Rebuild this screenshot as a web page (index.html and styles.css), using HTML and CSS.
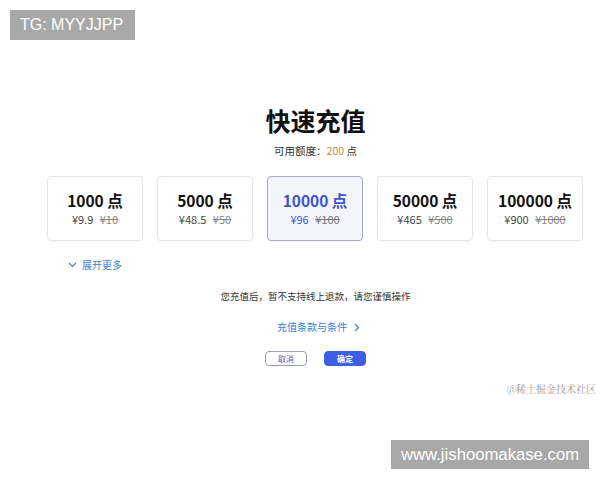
FILE: index.html
```html
<!DOCTYPE html>
<html lang="zh-CN">
<head>
    <meta charset="UTF-8">
    <meta name="viewport" content="width=device-width, initial-scale=1.0">
    <title>快速充值</title>
    <link rel="stylesheet" href="styles.css">
</head>
<body>
    <div class="tag tag-top">TG: MYYJJPP</div>

    <div class="recharge">
        <div class="title">快速充值</div>
        <div class="balance">可用额度：<span class="amount">200</span> 点</div>

        <div class="cards">
            <div class="card">
                <div class="points">1000 点</div>
                <div class="price">¥9.9 <s>¥10</s></div>
            </div>
            <div class="card">
                <div class="points">5000 点</div>
                <div class="price">¥48.5 <s>¥50</s></div>
            </div>
            <div class="card active">
                <div class="points">10000 点</div>
                <div class="price">¥96 <s>¥100</s></div>
            </div>
            <div class="card">
                <div class="points">50000 点</div>
                <div class="price">¥465 <s>¥500</s></div>
            </div>
            <div class="card">
                <div class="points">100000 点</div>
                <div class="price">¥900 <s>¥1000</s></div>
            </div>
        </div>

        <div class="more">
            <svg width="9" height="6" viewBox="0 0 9 6"><path d="M1 1l3.5 3.5L8 1" fill="none" stroke="#3b7fd0" stroke-width="1.1"/></svg>
            展开更多
        </div>

        <div class="notice">您充值后，暂不支持线上退款，请您谨慎操作</div>

        <div class="terms">充值条款与条件
            <svg width="6" height="9" viewBox="0 0 6 9"><path d="M1 1l3.5 3.5L1 8" fill="none" stroke="#3b7fd0" stroke-width="1.1"/></svg>
        </div>

        <div class="actions">
            <button class="btn btn-cancel">取消</button>
            <button class="btn btn-ok">确定</button>
        </div>
    </div>

    <div class="credit">@稀土掘金技术社区</div>
    <div class="tag tag-bottom">www.jishoomakase.com</div>
</body>
</html>
```

FILE: styles.css
```css
body {
    margin: 0;
    width: 600px;
    height: 480px;
    background: #ffffff;
    font-family: "Noto Sans CJK SC", "Noto Sans", sans-serif;
    color: #222;
    position: relative;
    overflow: hidden;
}
.tag {
    position: absolute;
    background: #a8a8a8;
    color: #ffffff;
    font-family: "Liberation Sans", Arial, sans-serif;
    font-size: 16px;
    line-height: 30px;
    padding: 0 10px;
}
.tag-top {
    top: 10px;
    left: 10px;
    width: 105px;
}
.tag-bottom {
    top: 440px;
    left: 391px;
    width: 178px;
    height: 29px;
    line-height: 29px;
    font-size: 16.7px;
}
.recharge {
    width: 537px;
    margin-left: 47px;
    padding-top: 102px;
    display: flex;
    flex-direction: column;
    align-items: center;
}
.title {
    font-size: 25px;
    font-weight: bold;
    color: #111;
    line-height: 36px;
}
.balance {
    font-size: 10.5px;
    color: #333;
    margin-top: 5px;
    line-height: 16px;
}
.amount {
    color: #c08a3e;
}
.cards {
    display: flex;
    gap: 14px;
    margin-top: 17px;
    align-self: stretch;
}
.card {
    width: 96px;
    height: 65px;
    box-sizing: border-box;
    border: 1px solid #e6e6e6;
    border-radius: 4px;
    background: #ffffff;
    box-shadow: 0 1px 2px rgba(0, 0, 0, 0.04);
    display: flex;
    flex-direction: column;
    align-items: center;
    justify-content: center;
}
.card.active {
    background: #f3f5fd;
    border-color: #a8abbf;
}
.points {
    font-size: 15.5px;
    font-weight: bold;
    color: #111;
    line-height: 22px;
    margin-top: -1px;
}
.price {
    font-size: 11px;
    color: #444;
    line-height: 16px;
}
.price s {
    color: #888;
    margin-left: 4px;
}
.active .points,
.active .price {
    color: #3d55c8;
}
.active .price s {
    color: #777;
}
.more {
    align-self: flex-start;
    margin-left: 21px;
    margin-top: 16px;
    font-size: 10px;
    color: #3b7fd0;
    line-height: 16px;
    display: flex;
    align-items: center;
    gap: 5px;
}
.notice {
    font-size: 9.5px;
    color: #333;
    margin-top: 15px;
    line-height: 16px;
}
.terms {
    font-size: 10px;
    color: #3b7fd0;
    margin-top: 15px;
    line-height: 16px;
    display: flex;
    align-items: center;
    gap: 7px;
    margin-left: 6px;
}
.actions {
    display: flex;
    gap: 17px;
    margin-top: 16px;
}
.btn {
    width: 42px;
    height: 15px;
    padding: 0;
    border-radius: 4px;
    font-family: "Noto Sans CJK SC", sans-serif;
    font-size: 8px;
    line-height: 13px;
}
.btn-cancel {
    background: #ffffff;
    border: 1px solid #9aa0b4;
    color: #4a5bb0;
}
.btn-ok {
    background: #3d5fe6;
    border: 1px solid #3d5fe6;
    color: #ffffff;
    font-weight: bold;
}
.credit {
    position: absolute;
    top: 381px;
    right: 4px;
    font-family: "Noto Serif CJK SC", "Noto Sans CJK SC", serif;
    font-size: 10px;
    color: #999;
}
```
